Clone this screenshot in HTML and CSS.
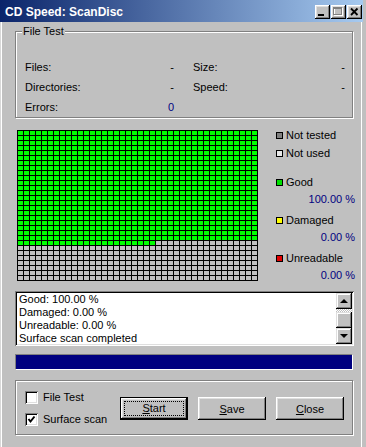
FILE: index.html
```html
<!DOCTYPE html>
<html lang="en">
<head>
  <meta charset="UTF-8">
  <title>CD Speed: ScanDisc</title>
  <link rel="stylesheet" href="styles.css">
</head>
<body>
  <div class="window">
    <!-- Title bar -->
    <div class="titlebar">
      <span class="title">CD Speed: ScanDisc</span>
      <div class="caption-buttons">
        <button class="cap-btn">
          <svg width="15" height="14" viewBox="0 0 15 14"><rect x="3" y="9" width="6" height="2" fill="#000"/></svg>
        </button>
        <button class="cap-btn">
          <svg width="15" height="14" viewBox="0 0 15 14">
            <rect x="3.5" y="3.5" width="8" height="7" fill="none" stroke="#fff"/>
            <rect x="2.5" y="2.5" width="8" height="7" fill="none" stroke="#808080"/>
            <rect x="2" y="3" width="9" height="1" fill="#808080"/>
          </svg>
        </button>
        <button class="cap-btn">
          <svg width="15" height="14" viewBox="0 0 15 14"><path d="M4 3.5 L10.5 10 M10.5 3.5 L4 10" stroke="#000" stroke-width="1.8"/></svg>
        </button>
      </div>
    </div>

    <div class="content">
      <!-- File test group -->
      <div class="group file-test">
        <span class="group-label">File Test</span>
        <div class="stats">
          <div class="stat"><span>Files:</span><span>-</span></div>
          <div class="stat"><span>Size:</span><span>-</span></div>
          <div class="stat"><span>Directories:</span><span>-</span></div>
          <div class="stat"><span>Speed:</span><span>-</span></div>
          <div class="stat"><span>Errors:</span><span class="num">0</span></div>
        </div>
      </div>

      <!-- Surface map + legend -->
      <div class="scan">
        <div class="surface"></div>
        <ul class="legend">
          <li class="key"><span class="swatch untested"></span>Not tested</li>
          <li class="key"><span class="swatch unused"></span>Not used</li>
          <li class="key first-stat"><span class="swatch good"></span>Good</li>
          <li class="pct">100.00 %</li>
          <li class="key next-stat"><span class="swatch damaged"></span>Damaged</li>
          <li class="pct">0.00 %</li>
          <li class="key next-stat"><span class="swatch unreadable"></span>Unreadable</li>
          <li class="pct">0.00 %</li>
        </ul>
      </div>

      <!-- Log -->
      <div class="log">
        <div class="log-lines">
          <div>Good: 100.00 %</div>
          <div>Damaged: 0.00 %</div>
          <div>Unreadable: 0.00 %</div>
          <div>Surface scan completed</div>
        </div>
        <div class="scrollbar">
          <div class="sb-btn">
            <svg width="16" height="16" viewBox="0 0 16 16"><polygon points="4,10 8,6 12,10" fill="#000"/></svg>
          </div>
          <div class="sb-thumb"></div>
          <div class="sb-btn down">
            <svg width="16" height="16" viewBox="0 0 16 16"><polygon points="4,6 8,10 12,6" fill="#000"/></svg>
          </div>
        </div>
      </div>

      <div class="progress"><div class="progress-fill"></div></div>

      <!-- Options and buttons -->
      <div class="group actions">
        <div class="checks">
          <label class="check"><span class="checkbox"></span>File Test</label>
          <label class="check">
            <span class="checkbox">
              <svg width="9" height="9" viewBox="0 0 9 9"><path d="M1.5 4 L3.5 6.5 L7.5 1.5" fill="none" stroke="#000" stroke-width="2"/></svg>
            </span>Surface scan
          </label>
        </div>
        <div class="buttons">
          <button class="btn default"><span class="focus"><u>S</u>tart</span></button>
          <button class="btn"><u>S</u>ave</button>
          <button class="btn"><u>C</u>lose</button>
        </div>
      </div>
    </div>
  </div>
</body>
</html>
```

FILE: styles.css
```css
* {
  box-sizing: border-box;
  margin: 0;
  padding: 0;
}
body {
  background: #c0c0c0;
  font-family: "Liberation Sans", Arial, sans-serif;
  font-size: 11px;
  color: #000;
}
.window {
  width: 366px;
  height: 447px;
  background: #c0c0c0;
  display: flex;
  flex-direction: column;
}

/* Title bar */
.titlebar {
  height: 22px;
  margin-right: 3px;
  padding: 1px 1px 0 5px;
  display: flex;
  align-items: center;
  justify-content: space-between;
  background: linear-gradient(90deg, #0a246a, #a6caf0);
}
.title {
  color: #fff;
  font-weight: bold;
  font-size: 12px;
}
.caption-buttons {
  display: flex;
  gap: 1px;
}
.cap-btn {
  width: 15px;
  height: 14px;
  border: none;
  background: #c0c0c0;
  display: block;
  box-shadow: inset -1px -1px #000, inset 1px 1px #fff, inset -2px -2px #808080, inset 2px 2px #dfdfdf;
}
.cap-btn svg { display: block; }

/* Window body */
.content {
  flex: 1;
  padding: 9px 0 0 15px;
  box-shadow: inset 1px 0 #d8d8d8, inset 2px 0 #fff, inset -4px 0 #c0c0c0, inset -5px 0 #fff;
}

/* Etched group boxes */
.group {
  position: relative;
  width: 338px;
  border: 1px solid #808080;
  box-shadow: inset 1px 1px #fff, 1px 1px #fff;
}
.group-label {
  position: absolute;
  top: -7px;
  left: 6px;
  padding: 0 1px;
  line-height: 13px;
  background: #c0c0c0;
}
.file-test {
  padding: 25px 7px 0 9px;
}
.stats {
  display: grid;
  grid-template-columns: 149px 152px;
  column-gap: 19px;
  grid-auto-rows: 20px;
}
.stat {
  display: flex;
  align-items: center;
  justify-content: space-between;
}
.num { color: #000080; }

/* Surface map */
.scan {
  display: flex;
  align-items: flex-start;
  margin-top: 12px;
  padding-left: 2px;
}
.surface {
  width: 241px;
  height: 151px;
  flex: none;
  background:
    repeating-linear-gradient(90deg, #000 0 1px, transparent 1px 6px),
    repeating-linear-gradient(180deg, #000 0 1px, transparent 1px 5px),
    linear-gradient(#00ff00, #00ff00) 0 0 / 100% 111px no-repeat,
    linear-gradient(#00ff00, #00ff00) 0 111px / 139px 5px no-repeat,
    #c0c0c0;
}
.legend {
  list-style: none;
  width: 79px;
  margin: -4px 0 0 18px;
}
.key {
  display: flex;
  align-items: center;
  line-height: 18px;
}
.first-stat { margin-top: 11px; }
.next-stat { margin-top: 4px; }
.pct {
  line-height: 16px;
  text-align: right;
  color: #000080;
}
.swatch {
  width: 7px;
  height: 7px;
  margin-right: 3px;
  border: 1px solid #000;
}
.untested { background: #808080; }
.unused { background: #e8e8e8; }
.good { background: #00e000; }
.damaged { background: #ffff00; }
.unreadable { background: #e00000; }

/* Log list */
.log {
  display: flex;
  width: 339px;
  height: 55px;
  margin-top: 8px;
  padding: 2px;
  background: #fff;
  box-shadow: inset 1px 1px #808080, inset -1px -1px #fff, inset 2px 2px #000, inset -2px -2px #dfdfdf;
}
.log-lines {
  flex: 1;
  padding-left: 2px;
  line-height: 13px;
}
.scrollbar {
  width: 16px;
  display: flex;
  flex-direction: column;
  background: repeating-conic-gradient(#fff 0 25%, #c0c0c0 0 50%) 0 0 / 2px 2px;
}
.sb-btn, .sb-thumb {
  width: 16px;
  height: 16px;
  background: #c0c0c0;
  box-shadow: inset -1px -1px #000, inset 1px 1px #dfdfdf, inset -2px -2px #808080, inset 2px 2px #fff;
}
.sb-btn svg { display: block; }
.sb-thumb { margin-top: 3px; }
.sb-btn.down { margin-top: auto; }

/* Progress */
.progress {
  width: 338px;
  height: 16px;
  margin-top: 8px;
  border: 1px solid;
  border-color: #808080 #fff #fff #808080;
}
.progress-fill {
  height: 100%;
  background: #000080;
}

/* Bottom group */
.actions {
  margin-top: 10px;
  display: flex;
  align-items: center;
  padding: 10px 8px 8px 9px;
}
.checks {
  display: flex;
  flex-direction: column;
  gap: 9px;
}
.check {
  display: flex;
  align-items: center;
  gap: 5px;
  line-height: 13px;
}
.checkbox {
  width: 13px;
  height: 13px;
  padding: 2px;
  background: #fff;
  box-shadow: inset 1px 1px #808080, inset -1px -1px #fff, inset 2px 2px #000, inset -2px -2px #dfdfdf;
}
.checkbox svg { display: block; }
.buttons {
  display: flex;
  gap: 10px;
  margin-left: auto;
}
.btn {
  width: 68px;
  height: 23px;
  border: none;
  background: #c0c0c0;
  font: inherit;
  color: #000;
  box-shadow: inset -1px -1px #000, inset 1px 1px #fff, inset -2px -2px #808080, inset 2px 2px #dfdfdf;
}
.btn.default {
  border: 1px solid #000;
  padding: 3px;
}
.focus {
  display: block;
  height: 100%;
  line-height: 13px;
  border: 1px dotted #000;
}
```
